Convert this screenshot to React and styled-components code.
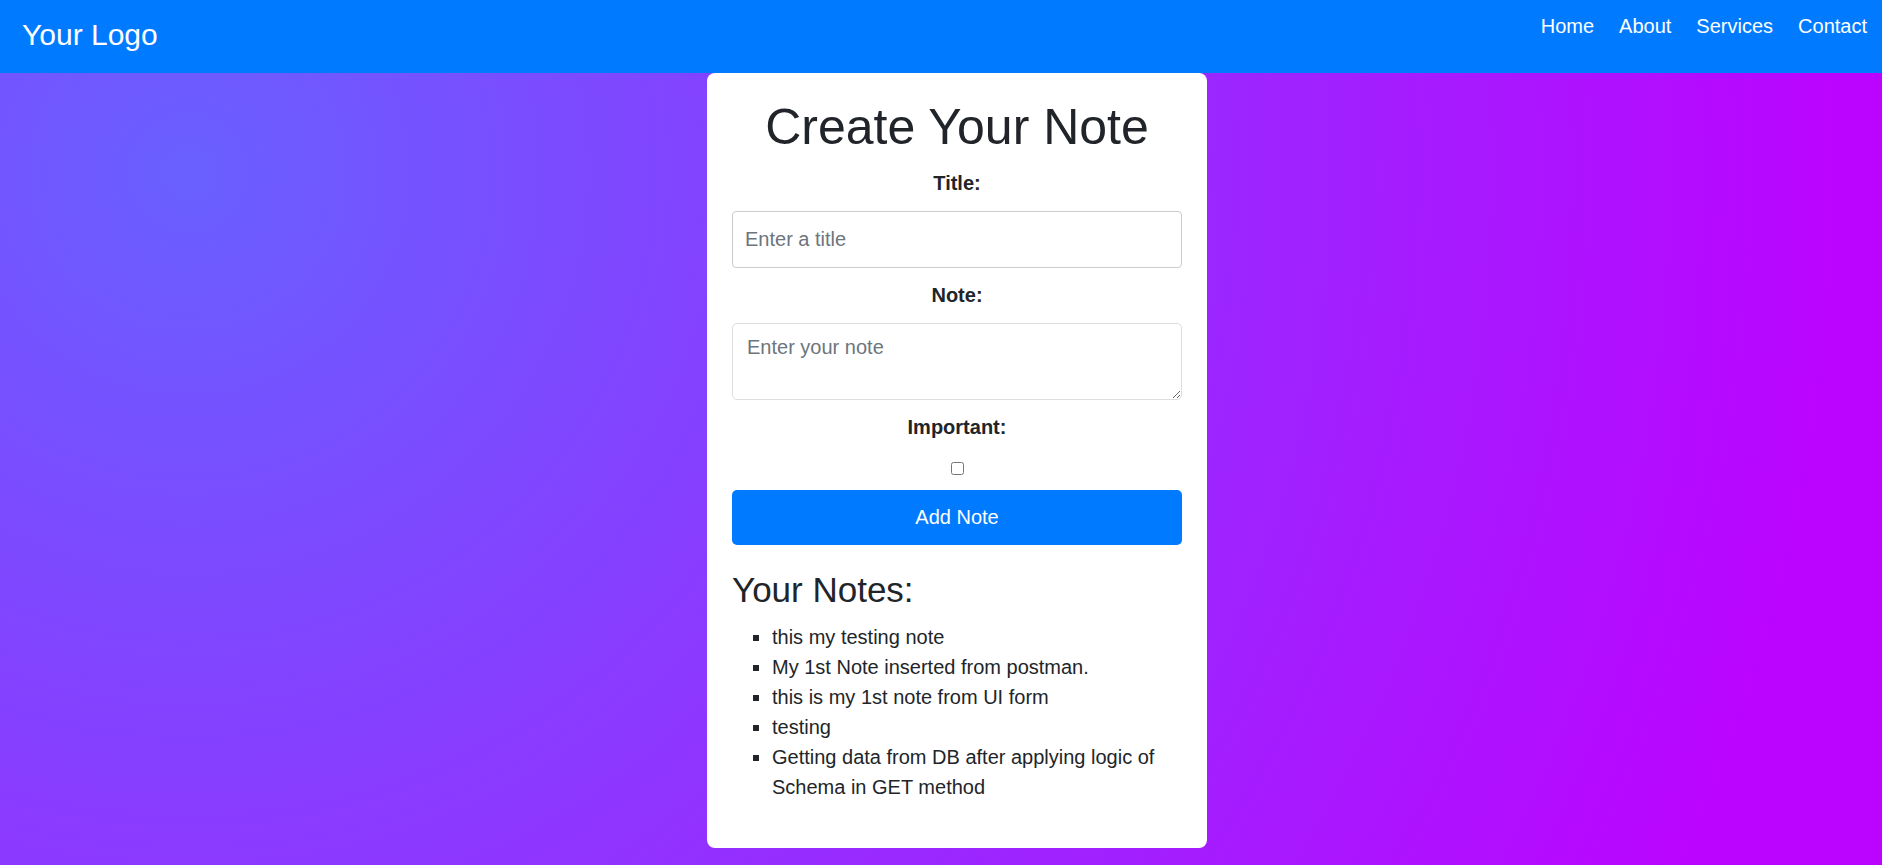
import React, { useState } from "react";
import styled, { createGlobalStyle } from "styled-components";

const GlobalStyle = createGlobalStyle`
  * {
    box-sizing: border-box;
  }
  body {
    margin: 0;
    min-height: 100vh;
    font-family: "Liberation Sans", Arial, sans-serif;
    color: #212529;
    background: radial-gradient(circle farthest-corner at 10% 20%, rgb(105, 96, 255) 0%, rgb(186, 4, 255) 90%);
  }
`;

const Header = styled.header`
  height: 73px;
  background-color: #007bff;
  display: flex;
  justify-content: space-between;
  align-items: flex-start;
`;

const Logo = styled.div`
  color: #fff;
  font-size: 30px;
  line-height: 70px;
  padding-left: 22px;
`;

const NavList = styled.ul`
  list-style: none;
  margin: 0;
  padding: 15px 15px 0 0;
  display: flex;
  gap: 25px;
`;

const NavLink = styled.a`
  color: #fff;
  font-size: 20px;
  line-height: 23px;
  text-decoration: none;
  cursor: pointer;
`;

const Main = styled.main`
  display: flex;
  justify-content: center;
  padding-left: 32px;
`;

const Card = styled.div`
  width: 500px;
  background: #fff;
  border-radius: 8px;
  padding: 26px 25px 46px;
`;

const Heading = styled.h1`
  margin: 0;
  font-size: 50px;
  line-height: 56px;
  font-weight: 400;
  text-align: center;
`;

const Form = styled.form`
  display: flex;
  flex-direction: column;
  gap: 16px;
  margin-top: 17px;
`;

const Label = styled.label`
  display: block;
  text-align: center;
  font-size: 20px;
  line-height: 23px;
  font-weight: 700;
`;

const TitleInput = styled.input`
  height: 57px;
  width: 100%;
  padding: 0 12px;
  border: 1px solid #ccc;
  border-radius: 4px;
  font-family: inherit;
  font-size: 20px;
  color: #212529;
  &::placeholder {
    color: #6c757d;
  }
`;

const NoteArea = styled.textarea`
  height: 77px;
  width: 100%;
  padding: 12px 14px;
  border: 1px solid #ddd;
  border-radius: 5px;
  font-family: inherit;
  font-size: 20px;
  line-height: 23px;
  color: #212529;
  &::placeholder {
    color: #6c757d;
  }
`;

const CheckRow = styled.div`
  display: flex;
  justify-content: center;
  padding-top: 7px;
  height: 20px;
`;

const Check = styled.input`
  margin: 0;
  width: 13px;
  height: 13px;
`;

const Button = styled.button`
  height: 55px;
  margin-top: -1px;
  border: none;
  border-radius: 5px;
  background-color: #007bff;
  color: #fff;
  font-family: inherit;
  font-size: 20px;
  cursor: pointer;
`;

const SubHeading = styled.h2`
  margin: 25px 0 12px;
  font-size: 35px;
  line-height: 40px;
  font-weight: 400;
`;

const NoteList = styled.ul`
  margin: 0;
  padding-left: 40px;
  list-style: square;
`;

const NoteItem = styled.li`
  font-size: 20px;
  line-height: 30px;
`;

const notes = [
  "this my testing note",
  "My 1st Note inserted from postman.",
  "this is my 1st note from UI form",
  "testing",
  "Getting data from DB after applying logic of Schema in GET method",
];

export default function App() {
  const [important, setImportant] = useState(false);

  return (
    <>
      <GlobalStyle />
      <Header>
        <Logo>Your Logo</Logo>
        <nav>
          <NavList>
            {["Home", "About", "Services", "Contact"].map((item) => (
              <li key={item}>
                <NavLink>{item}</NavLink>
              </li>
            ))}
          </NavList>
        </nav>
      </Header>
      <Main>
        <Card>
          <Heading>Create Your Note</Heading>
          <Form onSubmit={(e) => e.preventDefault()}>
            <Label htmlFor="title">Title:</Label>
            <TitleInput id="title" type="text" placeholder="Enter a title" />
            <Label htmlFor="note">Note:</Label>
            <NoteArea id="note" placeholder="Enter your note" />
            <Label htmlFor="important">Important:</Label>
            <CheckRow>
              <Check
                id="important"
                type="checkbox"
                checked={important}
                onChange={(e) => setImportant(e.target.checked)}
              />
            </CheckRow>
            <Button type="submit">Add Note</Button>
          </Form>
          <SubHeading>Your Notes:</SubHeading>
          <NoteList>
            {notes.map((note) => (
              <NoteItem key={note}>{note}</NoteItem>
            ))}
          </NoteList>
        </Card>
      </Main>
    </>
  );
}
